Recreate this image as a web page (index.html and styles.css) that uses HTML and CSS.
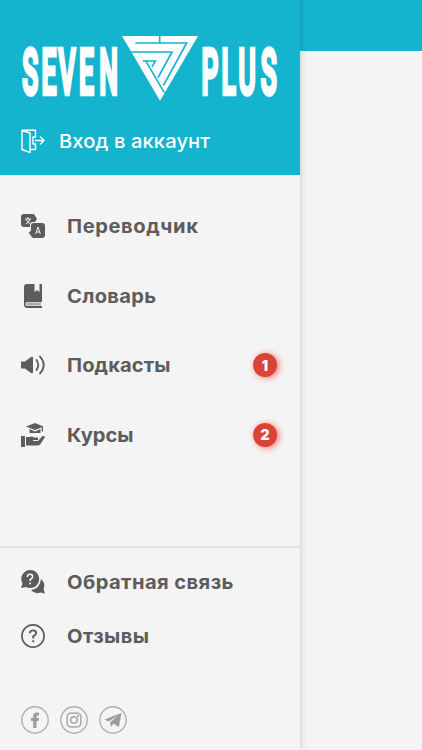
FILE: index.html
```html
<!DOCTYPE html>
<html lang="ru">
<head>
    <meta charset="UTF-8">
    <meta name="viewport" content="width=device-width, initial-scale=1.0">
    <title>Seven Plus</title>
    <link rel="stylesheet" href="styles.css">
</head>
<body>

<div class="page">
    <aside class="sidebar">
        <header class="sidebar-header">
            <svg class="logo" width="256" height="66" viewBox="0 0 256 66">
                <g class="logo-text" transform="translate(0 59.2) scale(.85 2.03)">
                    <text x="0.3 22.9 43 67.2 91">SEVEN</text>
                    <text x="211.2 234.8 254.8 281">PLUS</text>
                </g>
                <g transform="translate(88 -10) scale(.33333)">
                    <path fill="#fff" d="M36 33H264L150 227Z"/>
                    <path class="logo-cut" d="M149 32V54H76M149 54H230L160 182"/>
                    <path class="logo-cut" d="M58 81H186L144 158"/>
                    <path class="logo-cut" d="M98 108H136L126 126M108 109L163 203"/>
                </g>
            </svg>
            <a class="login" href="#">
                <svg width="24" height="24" viewBox="0 0 24 24" fill="none" stroke="currentColor" stroke-width="1.4" stroke-linejoin="round" stroke-linecap="round">
                    <path d="M1 1.5L9 4V23.5L1 20.5ZM1 1.2H14.5V8M9 20.5H14.5V15M14.5 8H12V15H14.5M14.5 11.5H23M19.5 8L23 11.5L19.5 15"/>
                </svg>
                <span class="label">Вход в аккаунт</span>
            </a>
        </header>

        <nav class="menu">
            <a class="item" href="#">
                <svg class="icon" viewBox="0 0 24 24">
                    <path d="M3 0H11.5Q13 0 13.8 1.3L16 5L14 8H12Q9 8 9 11V13H3Q0 13 0 10V3Q0 0 3 0Z"/>
                    <path d="M12.5 9H21Q24 9 24 12V21Q24 24 21 24H12.5Q10.5 24 10 21.5L7.5 19L10 16.5V11.5Q10 9 12.5 9Z"/>
                    <path fill="none" stroke="#f4f4f4" d="M4 5H10M7 3V5M9 5Q8 9 5 10M5 6L9 9.5M14.7 20L17 13L19.3 20M15.5 18H18.5"/>
                </svg>
                <span class="label translator">Переводчик</span>
            </a>
            <a class="item" href="#">
                <svg class="icon" viewBox="0 0 24 24">
                    <path d="M6 0H13.5V8L16 6L18.5 8V0H20Q21 0 21 1V18H6Q4.5 18 4.5 20T6 22H21V24H6Q3 24 3 20V3Q3 0 6 0Z"/>
                    <path fill="#aaa" d="M6 18.5H20V21.5H6Q4.5 20 6 18.5Z"/>
                </svg>
                <span class="label dictionary">Словарь</span>
            </a>
            <a class="item" href="#">
                <svg class="icon" viewBox="0 0 24 24">
                    <path d="M0 8.5H4L10 4Q12 3 12 5V19Q12 21 10 20L4 15.5H0Z"/>
                    <path fill="none" stroke="#5c5c5c" stroke-width="1.8" stroke-linecap="round" d="M15.5 7Q19 12 15.5 17M19 3.5Q26.5 12 19 20.5"/>
                </svg>
                <span class="label podcasts">Подкасты</span>
                <b class="badge">1</b>
            </a>
            <a class="item" href="#">
                <svg class="icon" viewBox="0 0 24 24">
                    <path d="M5 3.5L14 0L22.5 3.5L14 7ZM8.5 6L14 8.5L19.5 6V10H8.5ZM20.7 4H22V8.5H20.7Z"/>
                    <path d="M0 13H4V24H0ZM5 14H9Q11 13 13 14.5H16Q18 15 17 17H12V18H17L21 13.5Q23 12.5 24 14L19.5 21Q18.5 22.5 16 22.5H5Z"/>
                </svg>
                <span class="label courses">Курсы</span>
                <b class="badge">2</b>
            </a>
        </nav>

        <nav class="menu menu-bottom">
            <a class="item" href="#">
                <svg class="icon" viewBox="0 0 24 24">
                    <path d="M9 0A9 9 0 1 1 5 17L0 18L1.5 13.5A9 9 0 0 1 9 0Z"/>
                    <path d="M20 9A8 8 0 0 1 22.5 19L24 23.5L19.5 22.5Q14 25 10 20Q19 19 20 9Z"/>
                    <path fill="none" stroke="#f4f4f4" stroke-width="1.6" d="M6.3 7Q6.3 4.3 9 4.3T11.7 6.8Q11.7 8 9.2 9.5V11M9.2 12.5V14.3"/>
                </svg>
                <span class="label feedback">Обратная связь</span>
            </a>
            <a class="item" href="#">
                <svg class="icon icon-line" viewBox="0 0 24 24">
                    <circle cx="12" cy="12" r="11.1"/>
                    <path stroke-width="1.9" d="M8.8 9.3Q8.8 6.4 12 6.4T15.2 9.2Q15.2 10.8 12.2 12.4V14.5M12.2 16.2V18.3"/>
                </svg>
                <span class="label reviews">Отзывы</span>
            </a>
        </nav>

        <footer class="social">
            <a href="#">
                <svg width="28" height="28" viewBox="0 0 28 28">
                    <circle cx="14" cy="14" r="13.2"/>
                    <path class="solid" d="M12.2 22V15H10V12H12.2V10Q12.2 6.5 15.5 6.5H18V9.5H16.5Q15.5 9.5 15.5 10.7V12H18L17.6 15H15.5V22Z"/>
                </svg>
            </a>
            <a href="#">
                <svg width="28" height="28" viewBox="0 0 28 28">
                    <circle cx="14" cy="14" r="13.2"/>
                    <rect x="7.2" y="7.2" width="13.6" height="13.6" rx="3.5" stroke-width="1.7"/>
                    <circle cx="14" cy="14" r="3.2" stroke-width="1.7"/>
                    <circle class="solid" cx="18" cy="10" r="1"/>
                </svg>
            </a>
            <a href="#">
                <svg width="28" height="28" viewBox="0 0 28 28">
                    <circle cx="14" cy="14" r="13.2"/>
                    <path class="solid" d="M5.5 13.5L22.5 7L19.8 21L14.5 17.6L12 21L11 16.5L18.5 10L9.5 15.5Z"/>
                </svg>
            </a>
        </footer>
    </aside>

    <main class="content">
        <div class="topbar"></div>
    </main>
</div>

</body>
</html>
```
FILE: styles.css
```css
* {
    box-sizing: border-box;
}
body {
    margin: 0;
    background: #f4f4f4;
    font-family: Inter, "Open Sans", sans-serif;
    color: #5c5c5c;
}
a {
    color: inherit;
    text-decoration: none;
}
svg {
    display: block;
    flex-shrink: 0;
}
.page {
    display: flex;
    height: 750px;
    overflow: hidden;
}
.sidebar {
    display: flex;
    flex-direction: column;
    width: 300px;
    height: 750px;
    background: #f4f4f4;
    box-shadow: 1px 0 6px rgba(0, 0, 0, 0.16);
    z-index: 1;
}
.sidebar-header {
    height: 175px;
    padding: 35px 0 0 22px;
    background: #14b4ce;
    color: #fff;
}
.logo {
    overflow: visible;
}
.logo-text {
    fill: #fff;
    stroke: #fff;
    stroke-width: 3.6;
    font: 500 31px Roboto, sans-serif;
}
.logo-text text {
    vector-effect: non-scaling-stroke;
}
.logo-cut {
    fill: none;
    stroke: #14b4ce;
    stroke-width: 5;
}
.login {
    display: flex;
    align-items: center;
    gap: 14px;
    height: 24px;
    margin: 28px 0 0 -1px;
    font-size: 19px;
    font-weight: 500;
    white-space: nowrap;
}
.label {
    transform: scaleX(1.06);
    transform-origin: left;
    letter-spacing: 0.1px;
}
.menu {
    display: flex;
    flex-direction: column;
    padding: 16px 23px 0 21px;
}
.item {
    display: flex;
    align-items: center;
    height: 69.7px;
    font-size: 19px;
    font-weight: 700;
    white-space: nowrap;
}
.item .label {
    padding-top: 1px;
}
.translator {
    letter-spacing: 0.56px;
}
.dictionary {
    letter-spacing: 0.3px;
}
.courses {
    letter-spacing: 0;
}
.feedback,
.reviews {
    letter-spacing: 0.4px;
}
.icon {
    width: 24px;
    height: 24px;
    margin-right: 22px;
    fill: #5c5c5c;
}
.icon-line {
    fill: none;
    stroke: #5c5c5c;
    stroke-width: 1.6;
}
.badge {
    display: flex;
    align-items: center;
    justify-content: center;
    width: 24px;
    height: 24px;
    margin-left: auto;
    border-radius: 50%;
    background: #da4437;
    box-shadow: 2px 1px 6px rgba(255, 60, 60, 0.7);
    color: #fff;
    font-size: 14px;
    font-weight: 900;
}
.menu-bottom {
    margin-top: 76px;
    padding-top: 7px;
    border-top: 2px solid #e2e2e2;
}
.menu-bottom .item {
    height: 54px;
}
.social {
    display: flex;
    gap: 11px;
    margin-top: 43px;
    padding-left: 21px;
}
.social svg {
    fill: none;
    stroke: #b0b0b0;
    stroke-width: 1.4;
}
.social .solid {
    fill: #9c9c9c;
    stroke: none;
}
.content {
    flex: 1;
}
.topbar {
    height: 51px;
    background: #14b4ce;
}
```
